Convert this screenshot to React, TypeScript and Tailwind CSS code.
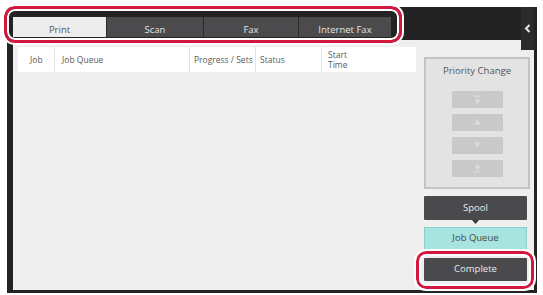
import React from "react";

const font = { fontFamily: "'Open Sans', 'Noto Sans', sans-serif" };

function Tab({ label, active, w }: { label: string; active?: boolean; w: string }) {
  return (
    <div
      className={`${w} h-[20px] flex items-end justify-center text-[9.5px] leading-none ${
        active ? "bg-[#ededed] text-[#555]" : "bg-[#4b4b4d] text-[#e4e4e4] border-l border-[#2a2a2a]"
      }`}
    >
      <span className="pb-[3px]">{label}</span>
    </div>
  );
}

function PBtn({ children }: { children: React.ReactNode }) {
  return (
    <div className="w-[51px] h-[17px] bg-[#c9c9c9] rounded-[1px] flex items-center justify-center">
      {children}
    </div>
  );
}

export default function App() {
  return (
    <div className="w-[543px] h-[295px] bg-white relative overflow-hidden pt-[7px] pl-[7px]" style={font}>
      <div className="w-[530px] h-[286px] bg-[#232323] flex flex-col pl-[6px] pr-[3px] pb-[3px] relative">
        {/* top bar */}
        <div className="h-[33px] flex items-start pt-[10px] shrink-0">
          <Tab label="Print" active w="w-[93px]" />
          <Tab label="Scan" w="w-[97px]" />
          <Tab label="Fax" w="w-[95px]" />
          <Tab label="Internet Fax" w="w-[93px]" />
        </div>
        {/* content */}
        <div className="flex-1 bg-[#efefef] flex">
          <div className="w-[403px] pl-[5px] pt-[7px]">
            <div className="w-[398px] h-[25px] bg-white flex text-[8.5px] text-[#5a5a5a] leading-[9px]">
              <div className="w-[37px] border-r border-[#e2e2e2] flex items-center pl-[12px]">Job</div>
              <div className="w-[135px] border-r border-[#e2e2e2] flex items-center pl-[7px]">Job Queue</div>
              <div className="w-[66px] border-r border-[#e2e2e2] flex items-center pl-[4px] whitespace-nowrap">Progress / Sets</div>
              <div className="w-[66px] border-r border-[#e2e2e2] flex items-center pl-[4px]">Status</div>
              <div className="flex-1 flex flex-col justify-center pl-[6px]">
                <span className="leading-[10px]">Start</span>
                <span className="leading-[10px]">Time</span>
              </div>
            </div>
          </div>
          <div className="flex-1 flex flex-col pl-[8px] pt-[17px]">
            <div className="w-[106px] h-[132px] bg-[#e3e3e3] border-2 border-[#c4c4c4] flex flex-col items-center">
              <div className="mt-[7px] text-[9.5px] text-[#555] leading-none">Priority Change</div>
              <div className="mt-[15px] flex flex-col gap-[6px]">
                <PBtn>
                  <svg width="9" height="9" viewBox="0 0 10 10"><rect x="1" y="0.5" width="8" height="1.5" fill="#dadada" /><path d="M5 3 L8.5 7.5 H6 V10 H4 V7.5 H1.5 Z" fill="#dadada" /></svg>
                </PBtn>
                <PBtn>
                  <svg width="9" height="8" viewBox="0 0 10 8"><path d="M5 1 L9 7 H1 Z" fill="#dadada" /></svg>
                </PBtn>
                <PBtn>
                  <svg width="9" height="8" viewBox="0 0 10 8"><path d="M5 7 L9 1 H1 Z" fill="#dadada" /></svg>
                </PBtn>
                <PBtn>
                  <svg width="9" height="9" viewBox="0 0 10 10"><rect x="1" y="8" width="8" height="1.5" fill="#dadada" /><path d="M5 7 L8.5 2.5 H6 V0 H4 V2.5 H1.5 Z" fill="#dadada" /></svg>
                </PBtn>
              </div>
            </div>
            <div className="mt-[7px] w-[103px] h-[24px] bg-[#4a4a4c] rounded-[1px] flex items-center justify-center text-[9.5px] text-[#ececec]">
              Spool
            </div>
            <div className="h-[7px] w-[103px] flex justify-center">
              <svg width="7" height="4" viewBox="0 0 7 4"><path d="M0 0 H7 L3.5 4 Z" fill="#3a3a3a" /></svg>
            </div>
            <div className="w-[103px] h-[23px] bg-[#a7e3df] border border-[#86cfcb] flex items-center justify-center text-[9.5px] text-[#4a4a4a]">
              Job Queue
            </div>
            <div className="h-[8px] w-[103px] flex justify-center">
              <svg width="5" height="3" viewBox="0 0 7 4"><path d="M0 0 H7 L3.5 4 Z" fill="#cfcfcf" /></svg>
            </div>
            <div className="w-[103px] h-[23px] bg-[#4a4a4c] rounded-[1px] flex items-center justify-center text-[9.5px] text-[#ececec]">
              Complete
            </div>
          </div>
        </div>
        {/* chevron tab */}
        <div className="absolute right-[3px] top-0 w-[13px] h-[43px] bg-[#2b2b2b] flex items-center justify-center">
          <svg width="7" height="9" viewBox="0 0 7 9"><path d="M5.5 1 L2 4.5 L5.5 8" stroke="#e8e8e8" strokeWidth="2" fill="none" /></svg>
        </div>
      </div>
      {/* highlights */}
      <div className="absolute left-[4px] top-[6px] w-[398px] h-[37px] rounded-[11px] border-[3px] border-[#d3173e] outline outline-2 outline-white ring-2 ring-inset ring-white pointer-events-none" />
      <div className="absolute left-[416px] top-[251px] w-[118px] h-[38px] rounded-[10px] border-[3px] border-[#d3173e] outline outline-2 outline-white ring-2 ring-inset ring-white pointer-events-none" />
    </div>
  );
}
